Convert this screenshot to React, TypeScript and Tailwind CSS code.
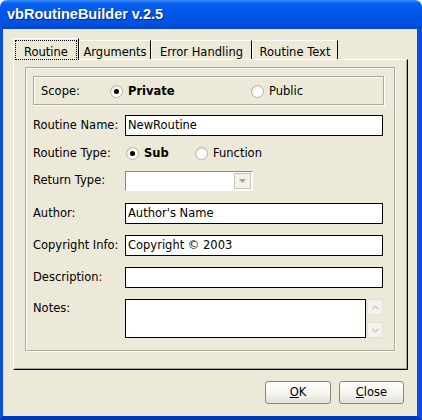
import { ChevronDown, ChevronUp } from "lucide-react";

const ui = { fontFamily: '"DejaVu Sans", Verdana, sans-serif' };

function Radio({ checked, label, bold }: { checked?: boolean; label: string; bold?: boolean }) {
    return (
        <div className="flex items-center">
            <span className="w-[13px] h-[13px] rounded-full border border-[#b9b6a8] bg-[radial-gradient(circle_at_65%_70%,#ffffff_0%,#ffffff_45%,#d8d5c8_100%)] flex items-center justify-center">
                {checked && <span className="w-[5px] h-[5px] rounded-full bg-black" />}
            </span>
            <span className={`ml-[5px] ${bold ? "font-bold" : ""}`}>{label}</span>
        </div>
    );
}

function Field({ label, value, top }: { label: string; value?: string; top: string }) {
    return (
        <div className={`flex items-center h-[21px] ${top}`}>
            <span className="w-[92px]">{label}</span>
            <div className="w-[258px] h-[21px] bg-white border border-black flex items-center pl-[2px]">{value}</div>
        </div>
    );
}

export default function App() {
    const tabs = [
        { label: "Arguments", w: "w-[72px]" },
        { label: "Error Handling", w: "w-[101px]" },
        { label: "Routine Text", w: "w-[86px]" },
    ];

    return (
        <div className="w-[422px] h-[420px] bg-white text-[11.5px] text-black" style={ui}>
            <div className="w-full h-full flex flex-col">
                {/* Title bar */}
                <div className="h-[29px] rounded-t-[7px] bg-[linear-gradient(to_bottom,#3d8ef7_0%,#0a60f0_12%,#0055e5_45%,#0052e3_80%,#0045cc_100%)] flex items-center pl-[7px]">
                    <span
                        className="text-white font-bold text-[14.5px] [text-shadow:1px_1px_0_#0a2a90]"
                        style={{ fontFamily: '"Liberation Sans", Arial, sans-serif' }}
                    >
                        vbRoutineBuilder v.2.5
                    </span>
                </div>

                {/* Body */}
                <div className="flex-1 bg-[#ECE9D8] border-l-[3px] border-r-[5px] border-b-[4px] border-l-[#0a4fde] border-r-[#0a4fde] border-b-[#0038b8] pl-[10px] pt-[9px]">
                    {/* Tabs */}
                    <div className="flex h-[21px] items-start">
                        <div className="relative z-10 w-[66px] h-[22px] bg-[#ECE9D8] border-l border-t border-white border-r border-r-black p-[1px]">
                            <div className="w-full h-[20px] border border-dotted border-black flex items-center justify-center pt-[5px]">Routine</div>
                        </div>
                        {tabs.map(t => (
                            <div
                                key={t.label}
                                className={`${t.w} mt-[2px] h-[19px] border-l border-t border-white border-r border-r-black flex items-center justify-center pt-[5px]`}
                            >
                                {t.label}
                            </div>
                        ))}
                    </div>

                    {/* Panel */}
                    <div className="w-[395px] h-[311px] border-l border-t border-white border-r border-b border-r-black border-b-black shadow-[inset_-1px_-1px_0_#ACA899] pl-[11px] pt-[7px]">
                        <div className="w-[370px] h-[284px] border border-[#ACA899] shadow-[inset_1px_1px_0_#fff,1px_1px_0_#fff] pl-[7px] pt-[8px]">
                            {/* Scope */}
                            <div className="w-[351px] h-[29px] border border-[#ACA899] shadow-[inset_1px_1px_0_#fff,1px_1px_0_#fff] flex items-center pl-[7px] pt-[2px]">
                                <span className="w-[69px]">Scope:</span>
                                <div className="w-[141px]">
                                    <Radio checked bold label="Private" />
                                </div>
                                <Radio label="Public" />
                            </div>

                            <Field label="Routine Name:" value="NewRoutine" top="mt-[10px]" />

                            <div className="flex items-center h-[21px] mt-[7px]">
                                <span className="w-[93px]">Routine Type:</span>
                                <div className="w-[69px]">
                                    <Radio checked bold label="Sub" />
                                </div>
                                <Radio label="Function" />
                            </div>

                            <div className="flex items-center h-[20px] mt-[7px]">
                                <span className="w-[92px]">Return Type:</span>
                                <div className="w-[128px] h-[20px] border-t border-l border-t-[#8c8a80] border-l-[#8c8a80] border-b border-r border-b-white border-r-white flex justify-end items-stretch p-[1px] bg-white">
                                    <div className="w-[17px] bg-[#f2f1eb] border border-[#c8c5b8] flex items-center justify-center">
                                        <svg width="7" height="4" viewBox="0 0 7 4">
                                            <path d="M0 0 H7 L3.5 4 Z" fill="#a7a6a0" />
                                        </svg>
                                    </div>
                                </div>
                            </div>

                            <Field label="Author:" value="Author's Name" top="mt-[12px]" />
                            <Field label="Copyright Info:" value="Copyright © 2003" top="mt-[11px]" />
                            <Field label="Description:" top="mt-[11px]" />

                            <div className="flex items-start mt-[11px]">
                                <span className="w-[92px] pt-[1px]">Notes:</span>
                                <div className="w-[241px] h-[39px] bg-white border border-black" />
                                <div className="ml-[1px] w-[16px] h-[39px] flex flex-col justify-between">
                                    <div className="h-[16px] rounded-[2px] border border-[#e4e2d8] bg-[#f3f2ec] flex items-center justify-center text-[#c8c6bc]">
                                        <ChevronUp size={11} strokeWidth={3} />
                                    </div>
                                    <div className="h-[16px] rounded-[2px] border border-[#e4e2d8] bg-[#f3f2ec] flex items-center justify-center text-[#c8c6bc]">
                                        <ChevronDown size={11} strokeWidth={3} />
                                    </div>
                                </div>
                            </div>
                        </div>
                    </div>

                    {/* Buttons */}
                    <div className="w-[395px] flex justify-end gap-[8px] pr-[4px] mt-[11px]">
                        <button className="w-[66px] h-[23px] rounded-[3px] border border-[#8a887e] bg-[linear-gradient(to_bottom,#ffffff_0%,#f4f3ee_60%,#e3e0d5_100%)]">
                            <span className="underline">O</span>K
                        </button>
                        <button className="w-[65px] h-[23px] rounded-[3px] border border-[#8a887e] bg-[linear-gradient(to_bottom,#ffffff_0%,#f4f3ee_60%,#e3e0d5_100%)]">
                            <span className="underline">C</span>lose
                        </button>
                    </div>
                </div>
            </div>
        </div>
    );
}
